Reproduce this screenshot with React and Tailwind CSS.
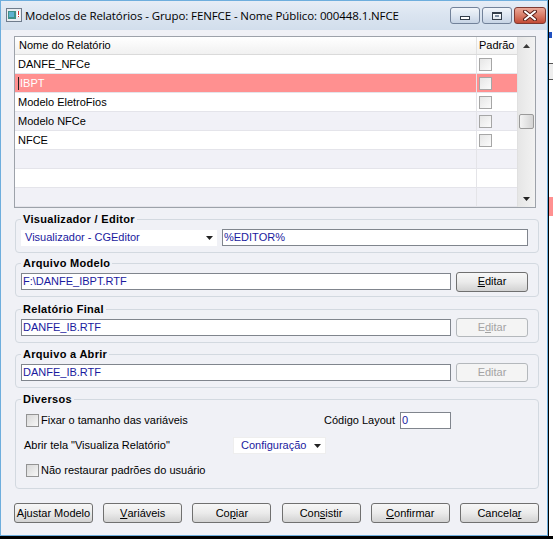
import React from 'react';

const rows = [
  { name: 'DANFE_NFCe', check: true },
  { name: 'IBPT', check: true, selected: true },
  { name: 'Modelo EletroFios', check: true },
  { name: 'Modelo NFCe', check: true },
  { name: 'NFCE', check: true },
  { name: '' },
  { name: '' },
  { name: '' },
];

const btnBase =
  'h-[20px] rounded-[3px] border border-[#707070] bg-linear-to-b from-[#f7f7f7] via-[#ebebeb] to-[#d2d2d2] text-[11px] leading-none text-black flex items-center justify-center';
const btnDisabled =
  'h-[19px] rounded-[3px] border border-[#b4b8bc] bg-[#f4f4f4] text-[11px] leading-none text-[#a3a3a3] flex items-center justify-center';
const field =
  'h-[17px] border border-[#80858d] bg-white text-[11px] leading-[15px] text-[#1a1a9e] px-[1px] whitespace-nowrap overflow-hidden';

const CheckBox = () => (
  <div className="w-[13px] h-[13px] border border-[#939393] bg-linear-to-br from-[#d8d8d8] to-[#f7f7f7] shrink-0" />
);

const GridCheck = () => (
  <div className="w-[13px] h-[13px] border border-[#a6a6a6] bg-linear-to-br from-[#e6e6e6] to-[#fbfbfb]" />
);

const Group = ({ title, children, className = '' }) => (
  <fieldset className={`ml-[1px] border border-[#d3d9e0] rounded-[4px] pl-[5px] pr-[10px] ${className}`}>
    <legend className="px-[2px] text-[11px] leading-[14px] font-bold tracking-[0.3px] text-black">{title}</legend>
    {children}
  </fieldset>
);

const Arrow = () => (
  <svg width="7" height="4" viewBox="0 0 7 4"><path d="M0 0h7L3.5 4z" fill="#222" /></svg>
);

function TitleBar() {
  return (
    <div className="h-[29px] flex items-start bg-linear-to-b from-[#e6edf6] via-[#dae4f0] to-[#d2deec]">
      <svg className="ml-[5px] mt-[7px]" width="16" height="14" viewBox="0 0 16 14">
        <rect x="0.5" y="0.5" width="15" height="13" fill="#e9edf2" stroke="#6f7c8c" />
        <rect x="2" y="3" width="8" height="8" fill="#3f8f88" />
        <rect x="3" y="4" width="5" height="5" fill="#5fb0d0" />
        <rect x="11" y="3" width="3" height="6" fill="#ffffff" />
        <rect x="12" y="3" width="1" height="4" fill="#d03030" />
        <rect x="12" y="8" width="1" height="1" fill="#d03030" />
      </svg>
      <div className="ml-[3px] mt-[7px] text-[11.5px] leading-[16px] text-black font-['Open_Sans',sans-serif] tracking-[-0.1px] whitespace-nowrap">
        Modelos de Relatórios - Grupo: FENFCE - Nome Público: 000448.1.NFCE
      </div>
      <div className="ml-auto mt-[6px] mr-[1px] flex gap-[2px]">
        <div className="w-[30px] h-[17px] rounded-[3px] border border-[#72829a] bg-linear-to-b from-[#f1f5fa] via-[#dde6f1] to-[#c7d4e5] flex items-end justify-center pb-[3px]">
          <div className="w-[10px] h-[4px] border border-[#333d4a] bg-white" />
        </div>
        <div className="w-[30px] h-[17px] rounded-[3px] border border-[#72829a] bg-linear-to-b from-[#f1f5fa] via-[#dde6f1] to-[#c7d4e5] flex items-center justify-center">
          <div className="w-[10px] h-[8px] border border-[#333d4a] border-t-[2px] bg-linear-to-b from-white to-[#dfe6ee] flex items-center justify-center">
            <div className="w-[4px] h-[2px] bg-[#8090a4]" />
          </div>
        </div>
        <div className="w-[32px] h-[17px] rounded-[3px] border border-[#7e3b33] bg-linear-to-b from-[#eaa898] via-[#d87c67] to-[#c24a36] flex items-center justify-center">
          <svg width="14" height="11" viewBox="0 0 14 11">
            <path d="M2 1.5L12 9.5M12 1.5L2 9.5" stroke="#5a2018" strokeWidth="4" strokeLinecap="round" />
            <path d="M2 1.5L12 9.5M12 1.5L2 9.5" stroke="#ffffff" strokeWidth="2" strokeLinecap="round" />
          </svg>
        </div>
      </div>
    </div>
  );
}

function ReportGrid() {
  return (
    <div className="mr-[3px] h-[172px] border border-[#9da2aa] bg-white flex overflow-hidden">
      <div className="flex-1 flex flex-col">
        <div className="h-[18px] flex shrink-0 border-b border-[#dadada] bg-linear-to-b from-white to-[#f1f1f1]">
          <div className="flex-1 pl-[4px] text-[11px] leading-[17px] text-black">Nome do Relatório</div>
          <div className="w-[41px] border-l border-[#e2e2e2] pl-[2px] text-[11px] leading-[17px] text-black">Padrão</div>
        </div>
        {rows.map((r, i) => (
          <div
            key={i}
            className={`h-[19px] shrink-0 flex border-b border-[#e4e4ea] ${
              r.selected ? 'bg-[#ff9090]' : i % 2 === 1 ? 'bg-[#f1f1f7]' : 'bg-white'
            }`}
          >
            <div className={`flex-1 pl-[3px] flex items-center text-[11px] ${r.selected ? 'text-white' : 'text-black'}`}>
              {r.selected && <div className="w-[1px] h-[13px] bg-[#222] mr-[1px]" />}
              {r.name}
            </div>
            <div className="w-[41px] border-l border-[#e4e4e8] pl-[2px] flex items-center">
              {r.check && <GridCheck />}
            </div>
          </div>
        ))}
      </div>
      <div className="w-[18px] border-l border-[#e0e0e0] bg-linear-to-r from-[#e6e6e6] to-[#f2f2f2] flex flex-col items-center">
        <div className="h-[17px] flex items-center justify-center">
          <svg width="7" height="4" viewBox="0 0 7 4"><path d="M0 4h7L3.5 0z" fill="#3a3a3a" /></svg>
        </div>
        <div className="mt-[60px] w-[15px] h-[15px] rounded-[2px] border border-[#9a9a9a] bg-linear-to-r from-[#f4f4f4] via-[#e4e4e4] to-[#d4d4d4]" />
        <div className="flex-1" />
        <div className="h-[17px] flex items-center justify-center">
          <Arrow />
        </div>
      </div>
    </div>
  );
}

function BottomButton({ children }) {
  return <div className={`${btnBase} w-[79px]`}>{children}</div>;
}

export default function App() {
  return (
    <div className="w-[553px] h-[539px] bg-black flex overflow-hidden font-['Liberation_Sans',Arial,sans-serif]">
      <div className="w-[548px] h-[536px] border border-[#6eaedd] flex flex-col shrink-0">
        <TitleBar />
        <div className="flex-1 bg-[#f0f1f6] pl-[13px] pr-[8px] pt-[6px] flex flex-col">
          <ReportGrid />

          <Group title="Visualizador / Editor" className="mt-[4px] pb-[5px]">
            <div className="pt-[2px] h-[21px] flex items-center gap-[5px]">
              <div className="w-[196px] h-[16px] bg-white flex items-center pl-[4px] pr-[4px] text-[11px] text-[#1a1a9e]">
                <span className="flex-1">Visualizador - CGEditor</span>
                <Arrow />
              </div>
              <div className={`${field} flex-1 h-[17px]`}>%EDITOR%</div>
            </div>
          </Group>

          <Group title="Arquivo Modelo" className="mt-[3px] pb-[5px]">
            <div className="pt-[2px] h-[21px] flex items-center gap-[5px]">
              <div className={`${field} flex-1`}>F:\DANFE_IBPT.RTF</div>
              <div className={`${btnBase} w-[72px] h-[19px]`}>
                <span className="underline">E</span>ditar
              </div>
            </div>
          </Group>

          <Group title="Relatório Final" className="mt-[5px] pb-[5px]">
            <div className="pt-[2px] h-[21px] flex items-center gap-[5px]">
              <div className={`${field} flex-1`}>DANFE_IB.RTF</div>
              <div className={`${btnDisabled} w-[72px]`}>
                E<span className="underline">d</span>itar
              </div>
            </div>
          </Group>

          <Group title="Arquivo a Abrir" className="mt-[4px] pb-[5px]">
            <div className="pt-[2px] h-[21px] flex items-center gap-[5px]">
              <div className={`${field} flex-1`}>DANFE_IB.RTF</div>
              <div className={`${btnDisabled} w-[72px]`}>Editar</div>
            </div>
          </Group>

          <Group title="Diversos" className="mt-[4px] pb-[8px]">
            <div className="pt-[5px] flex flex-col gap-[6px]">
              <div className="h-[19px] flex items-center">
                <div className="ml-[5px] flex items-center gap-[2px] text-[11px] text-black">
                  <CheckBox />
                  <span>Fixar o tamanho das variáveis</span>
                </div>
                <div className="ml-auto mr-[77px] flex items-center gap-[5px] text-[11px] text-black">
                  <span>Código Layout</span>
                  <div className={`${field} w-[51px]`}>0</div>
                </div>
              </div>
              <div className="h-[19px] flex items-center">
                <span className="ml-[3px] w-[209px] text-[11px] text-black">Abrir tela "Visualiza Relatório"</span>
                <div className="w-[93px] h-[17px] bg-white border border-[#eeeeee] flex items-center pl-[7px] pr-[4px] text-[11px] text-[#1a1a9e]">
                  <span className="flex-1">Configuração</span>
                  <Arrow />
                </div>
              </div>
              <div className="h-[19px] flex items-center">
                <div className="ml-[5px] flex items-center gap-[2px] text-[11px] text-black">
                  <CheckBox />
                  <span>Não restaurar padrões do usuário</span>
                </div>
              </div>
            </div>
          </Group>

          <div className="mt-[14px] flex justify-between">
            <BottomButton>Ajustar Modelo</BottomButton>
            <BottomButton>
              <span className="underline">V</span>ariáveis
            </BottomButton>
            <BottomButton>
              Co<span className="underline">p</span>iar
            </BottomButton>
            <BottomButton>
              Con<span className="underline">s</span>istir
            </BottomButton>
            <BottomButton>
              <span className="underline">C</span>onfirmar
            </BottomButton>
            <BottomButton>
              Cancela<span className="underline">r</span>
            </BottomButton>
          </div>
        </div>
      </div>
      <div className="flex-1 h-[536px] bg-white border-l border-black flex flex-col">
        <div className="h-[32px]" />
        <div className="h-[6px] bg-[#2050c0] w-[3px]" />
        <div className="h-[25px]" />
        <div className="h-[17px] bg-[#eeeeee] border-y border-[#555]" />
        <div className="h-[117px]" />
        <div className="h-[19px] bg-[#ff9090]" />
      </div>
    </div>
  );
}
